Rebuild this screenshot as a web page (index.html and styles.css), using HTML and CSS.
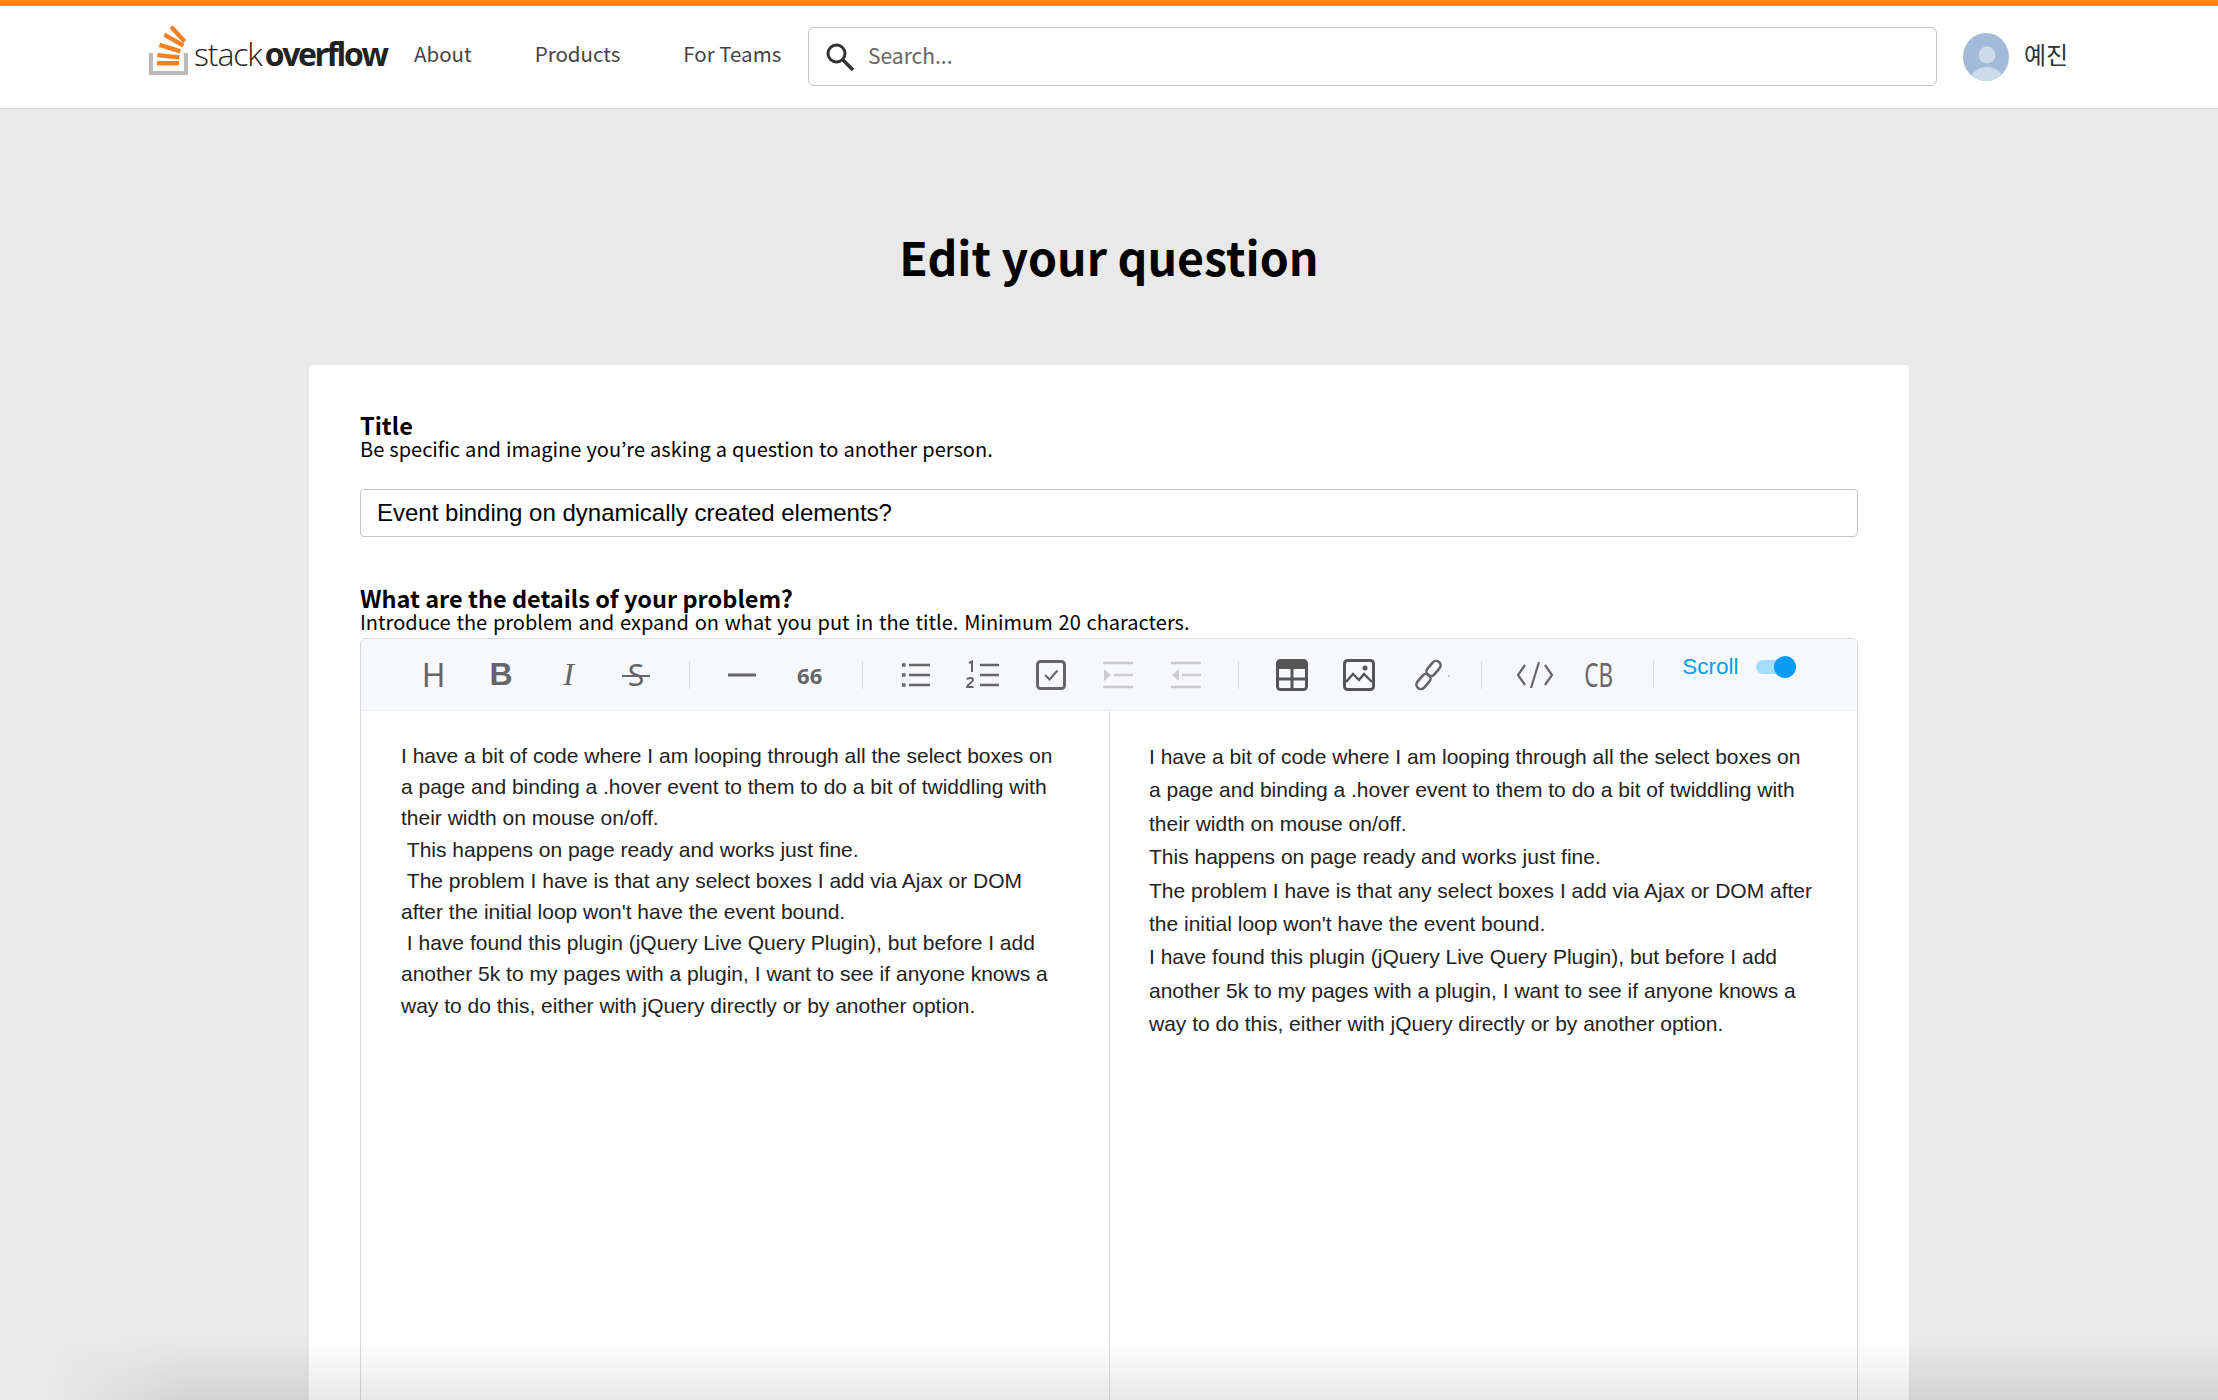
FILE: index.html
```html
<!DOCTYPE HTML>
<html>
  <head>
    <meta http-equiv="Content-type" content="text/html;charset=UTF-8">
    <title>Edit your question</title>
    <link rel="stylesheet" href="styles.css">
  </head>
  <body>
    <header class="topbar">
      <a class="logo">
        <svg class="logo-mark" width="42" height="50" viewBox="0 0 42 50">
          <path d="M3 28v20h35V28" fill="none" stroke="#bcbbbb" stroke-width="4"/>
          <g fill="#f48024">
            <rect x="9" y="36" width="22" height="4.4"/>
            <rect x="9.400" y="29" width="22" height="4.4" transform="rotate(6 20 31)"/>
            <rect x="11" y="21" width="22" height="4.400" transform="rotate(17 22 23)"/>
            <rect x="15" y="13" width="22" height="4.400" transform="rotate(30 26 15)"/>
            <rect x="20" y="7" width="20" height="4.400" transform="rotate(47 30 9)"/>
          </g>
        </svg>
        <span class="logo-text">stack<b>overflow</b></span>
      </a>
      <nav class="nav">
        <a>About</a>
        <a>Products</a>
        <a>For Teams</a>
      </nav>
      <div class="search">
        <svg width="32" height="32" viewBox="0 0 32 32">
          <circle cx="12.500" cy="12.500" r="8.500" fill="none" stroke="#333" stroke-width="3"/>
          <path d="M19 19l10 10" stroke="#333" stroke-width="3.600"/>
        </svg>
        <span>Search...</span>
      </div>
      <div class="user">
        <svg class="avatar" width="46" height="48" viewBox="0 0 46 48">
          <defs><clipPath id="avatarclip"><ellipse cx="23" cy="24" rx="23" ry="24"/></clipPath></defs>
          <ellipse cx="23" cy="24" rx="23" ry="24" fill="#a3bbd9"/>
          <circle cx="24" cy="22" r="8.500" fill="#cddaea"/>
          <ellipse cx="24" cy="47" rx="16" ry="13" fill="#cddaea" clip-path="url(#avatarclip)"/>
        </svg>
        <span>예진</span>
      </div>
    </header>

    <main class="page">
      <h1>Edit your question</h1>
      <section class="card">
        <label class="field-label">Title</label>
        <p class="field-help">Be specific and imagine you’re asking a question to another person.</p>
        <div class="title-input">Event binding on dynamically created elements?</div>

        <label class="field-label second">What are the details of your problem?</label>
        <p class="field-help wide">Introduce the problem and expand on what you put in the title. Minimum 20 characters.</p>

        <div class="editor">
          <div class="toolbar">
            <span class="tool t-h">H</span>
            <span class="tool t-b">B</span>
            <span class="tool t-i">I</span>
            <span class="tool t-s">S</span>
            <i class="sep"></i>
            <span class="tool"><svg width="32" height="32" viewBox="0 0 32 32"><path d="M2 16h28" stroke="#666" stroke-width="3"/></svg></span>
            <span class="tool t-q">66</span>
            <i class="sep"></i>
            <span class="tool"><svg width="32" height="32" viewBox="0 0 32 32"><path d="M9 6h21M9 16h21M9 26h21" stroke="#666" stroke-width="2.400"/><path d="M2 6h3.500M2 16h3.500M2 26h3.500" stroke="#666" stroke-width="3.500"/></svg></span>
            <span class="tool"><svg width="34" height="32" viewBox="0 0 34 32"><path d="M14 6h19M14 16h19M14 26h19" stroke="#666" stroke-width="2.400"/><path d="M3 4l3-1.500V13M1 20.500c1-2 6-2 6 .5 0 2-5 4-6 7h6.500" fill="none" stroke="#666" stroke-width="2"/></svg></span>
            <span class="tool"><svg width="32" height="32" viewBox="0 0 32 32"><rect x="2.500" y="2.500" width="27" height="27" rx="3" fill="#f7f8fc" stroke="#666" stroke-width="3"/><path d="M10 16l4.500 4.500 8-9" fill="none" stroke="#666" stroke-width="2"/></svg></span>
            <span class="tool"><svg width="32" height="32" viewBox="0 0 32 32"><path d="M1 4h30M12 16h19M1 28h30" stroke="#ccc" stroke-width="2.600"/><path d="M2 10l7 6-7 6z" fill="#ccc"/></svg></span>
            <span class="tool"><svg width="32" height="32" viewBox="0 0 32 32"><path d="M1 4h30M12 16h19M1 28h30" stroke="#ccc" stroke-width="2.600"/><path d="M9 10l-7 6 7 6z" fill="#ccc"/></svg></span>
            <i class="sep"></i>
            <span class="tool"><svg width="32" height="32" viewBox="0 0 32 32"><rect x="1.500" y="1.500" width="29" height="29" rx="3" fill="none" stroke="#555" stroke-width="3"/><path d="M2 3h28v7H2z" fill="#555"/><path d="M16 10v20M2 20h28" stroke="#555" stroke-width="3"/></svg></span>
            <span class="tool"><svg width="32" height="32" viewBox="0 0 32 32"><rect x="1.500" y="1.500" width="29" height="29" rx="3" fill="none" stroke="#555" stroke-width="3"/><path d="M3 23l7-8 6 6 5-6 8 8" fill="none" stroke="#555" stroke-width="2.400"/><circle cx="22" cy="9" r="2.500" fill="#555"/></svg></span>
            <span class="tool t-link"><svg width="40" height="32" viewBox="0 0 40 32"><g fill="none" stroke="#666" stroke-width="2.600"><rect x="16" y="1" width="9" height="17" rx="4.500" transform="rotate(40 20.500 9.500)"/><rect x="6" y="14" width="9" height="17" rx="4.500" transform="rotate(40 10.500 22.500)"/></g><circle cx="36" cy="17" r="1" fill="#bbb"/></svg></span>
            <i class="sep"></i>
            <span class="tool"><svg width="38" height="28" viewBox="0 0 38 28"><path d="M9 4L2 14l7 10M29 4l7 10-7 10M23 1l-8 26" fill="none" stroke="#666" stroke-width="2.200"/></svg></span>
            <span class="tool t-cb">CB</span>
            <i class="sep"></i>
            <span class="scroll-label">Scroll</span>
            <span class="toggle"><i></i></span>
          </div>
          <div class="panes">
            <div class="pane input-pane">
              <p>I have a bit of code where I am looping through all the select boxes on a page and binding a .hover event to them to do a bit of twiddling with their width on mouse on/off.</p>
              <p>&nbsp;This happens on page ready and works just fine.</p>
              <p>&nbsp;The problem I have is that any select boxes I add via Ajax or DOM after the initial loop won't have the event bound.</p>
              <p>&nbsp;I have found this plugin (jQuery Live Query Plugin), but before I add another 5k to my pages with a plugin, I want to see if anyone knows a way to do this, either with jQuery directly or by another option.</p>
            </div>
            <div class="pane preview-pane">
              <p>I have a bit of code where I am looping through all the select boxes on a page and binding a .hover event to them to do a bit of twiddling with their width on mouse on/off.</p>
              <p>This happens on page ready and works just fine.</p>
              <p>The problem I have is that any select boxes I add via Ajax or DOM after the initial loop won't have the event bound.</p>
              <p>I have found this plugin (jQuery Live Query Plugin), but before I add another 5k to my pages with a plugin, I want to see if anyone knows a way to do this, either with jQuery directly or by another option.</p>
            </div>
          </div>
        </div>
      </section>
    </main>
    <div class="bottom-shade"></div>
  </body>
</html>
```

FILE: styles.css
```css
html, body {
  margin: 0;
  height: 1400px;
  overflow: hidden;
  background: #e9e9e9;
  font-family: "Noto Sans CJK KR", "Noto Sans", sans-serif;
  color: #000;
}
.topbar {
  display: flex;
  align-items: center;
  height: 102px;
  border-top: 6px solid #ff8c00;
  border-bottom: 1px solid #d6d6d6;
  background: #fff;
  padding-left: 148px;
  box-sizing: content-box;
}
.logo {
  display: flex;
  align-items: flex-end;
  width: 266px;
  flex: none;
  margin-top: -14px;
}
.logo-mark {
  flex: none;
}
.logo-text {
  font-family: "Open Sans", sans-serif;
  font-weight: 300;
  font-size: 32px;
  line-height: 40px;
  letter-spacing: -1.1px;
  color: #222;
  margin: 0 0 1px 4px;
}
.logo-text b {
  font-weight: 700;
  margin-left: 3px;
  letter-spacing: -2.400px;
}
.nav {
  display: flex;
  gap: 63px;
  width: 394px;
  flex: none;
  margin-top: -8px;
  font-size: 20.5px;
  color: #444;
}
.search {
  display: flex;
  align-items: center;
  gap: 12px;
  box-sizing: border-box;
  width: 1129px;
  height: 59px;
  margin-top: -1px;
  padding-left: 15px;
  border: 1px solid #c4c4c4;
  border-radius: 6px;
  font-size: 21px;
  color: #666;
}
.search span {
  margin-top: -3px;
}
.user {
  display: flex;
  align-items: center;
  gap: 15px;
  margin-left: 26px;
  font-size: 24px;
  color: #333;
}
.user span {
  margin-top: -7px;
}
.page h1 {
  margin: 0;
  padding-top: 112px;
  text-align: center;
  font-size: 46.5px;
  line-height: 70px;
  font-weight: 700;
}
.card {
  box-sizing: border-box;
  width: 1600px;
  height: 1100px;
  margin: 74px 0 0 309px;
  padding: 46px 51px 0;
  background: #fff;
  border-radius: 4px;
}
.field-label {
  display: block;
  font-size: 23.500px;
  line-height: 28px;
  font-weight: 700;
}
.field-label.second {
  margin-top: 47px;
}
.field-help {
  margin: 0;
  font-size: 20px;
  line-height: 20px;
  word-spacing: .6px;
}
.field-help.wide {
  word-spacing: 1.3px;
}
.title-input {
  box-sizing: border-box;
  height: 48px;
  margin-top: 30px;
  padding-left: 16px;
  border: 1px solid #c4c4c4;
  border-radius: 4px;
  font-family: "Liberation Sans", sans-serif;
  font-size: 24px;
  line-height: 46px;
}
.editor {
  box-sizing: border-box;
  height: 800px;
  margin-top: 6px;
  border: 1px solid #d9d9d9;
  border-radius: 6px 6px 0 0;
}
.toolbar {
  display: flex;
  align-items: center;
  height: 71px;
  padding-left: 39px;
  background: #f7f8fc;
  border-bottom: 1px solid #eceef2;
  border-radius: 6px 6px 0 0;
}
.tool {
  display: flex;
  align-items: center;
  justify-content: center;
  width: 67.4px;
  height: 40px;
  flex: none;
  color: #666;
  font-family: "Liberation Sans", sans-serif;
  font-size: 32px;
}
.t-h {
  font-family: "Noto Sans", sans-serif;
  font-weight: 400;
}
.t-b {
  font-weight: 700;
}
.t-i {
  font-family: "Liberation Serif", serif;
  font-style: italic;
}
.t-s {
  position: relative;
  font-family: "Noto Sans", sans-serif;
  font-weight: 400;
  font-size: 30px;
}
.t-s::after {
  content: "";
  position: absolute;
  left: 20px;
  right: 20px;
  top: 20px;
  height: 2px;
  background: #666;
}
.t-q {
  font-family: "Noto Sans", sans-serif;
  font-size: 22px;
  font-weight: 700;
}
.t-link {
  padding-left: 6px;
  margin-right: -4px;
}
.t-cb {
  font-family: "Noto Sans", sans-serif;
  font-weight: 400;
  font-size: 32px;
  transform: scaleX(.7);
  margin: 0 2px 0 -4px;
}
.sep {
  width: 1px;
  height: 28px;
  margin: 0 19px;
  background: #ddd;
  flex: none;
}
.scroll-label {
  margin: -15px 0 0 9px;
  font-family: "Liberation Sans", sans-serif;
  font-size: 22.500px;
  color: #00a0e9;
}
.toggle {
  position: relative;
  width: 40px;
  height: 14px;
  margin: -15px 0 0 17px;
  background: #a6dcfb;
  border-radius: 7px;
}
.toggle i {
  position: absolute;
  top: -4px;
  right: 0;
  width: 22px;
  height: 22px;
  background: #0a9cf5;
  border-radius: 50%;
}
.panes {
  display: flex;
  height: 728px;
}
.pane {
  box-sizing: border-box;
  font-family: "Liberation Sans", sans-serif;
  color: #222;
}
.pane p {
  margin: 0;
}
.input-pane {
  width: 749px;
  padding: 29px 40px 0;
  border-right: 1px solid #ddd;
  font-size: 21px;
  line-height: 31.2px;
}
.preview-pane {
  flex: 1;
  padding: 29px 44px 0 39px;
  font-size: 21px;
  line-height: 33.4px;
}
.bottom-shade {
  position: fixed;
  left: 0;
  right: 0;
  bottom: 0;
  height: 60px;
  background: linear-gradient(to bottom, rgba(0,0,0,0), rgba(0,0,0,.09));
  -webkit-mask-image: linear-gradient(to right, transparent 50px, #000 190px);
  mask-image: linear-gradient(to right, transparent 50px, #000 190px);
}
```
